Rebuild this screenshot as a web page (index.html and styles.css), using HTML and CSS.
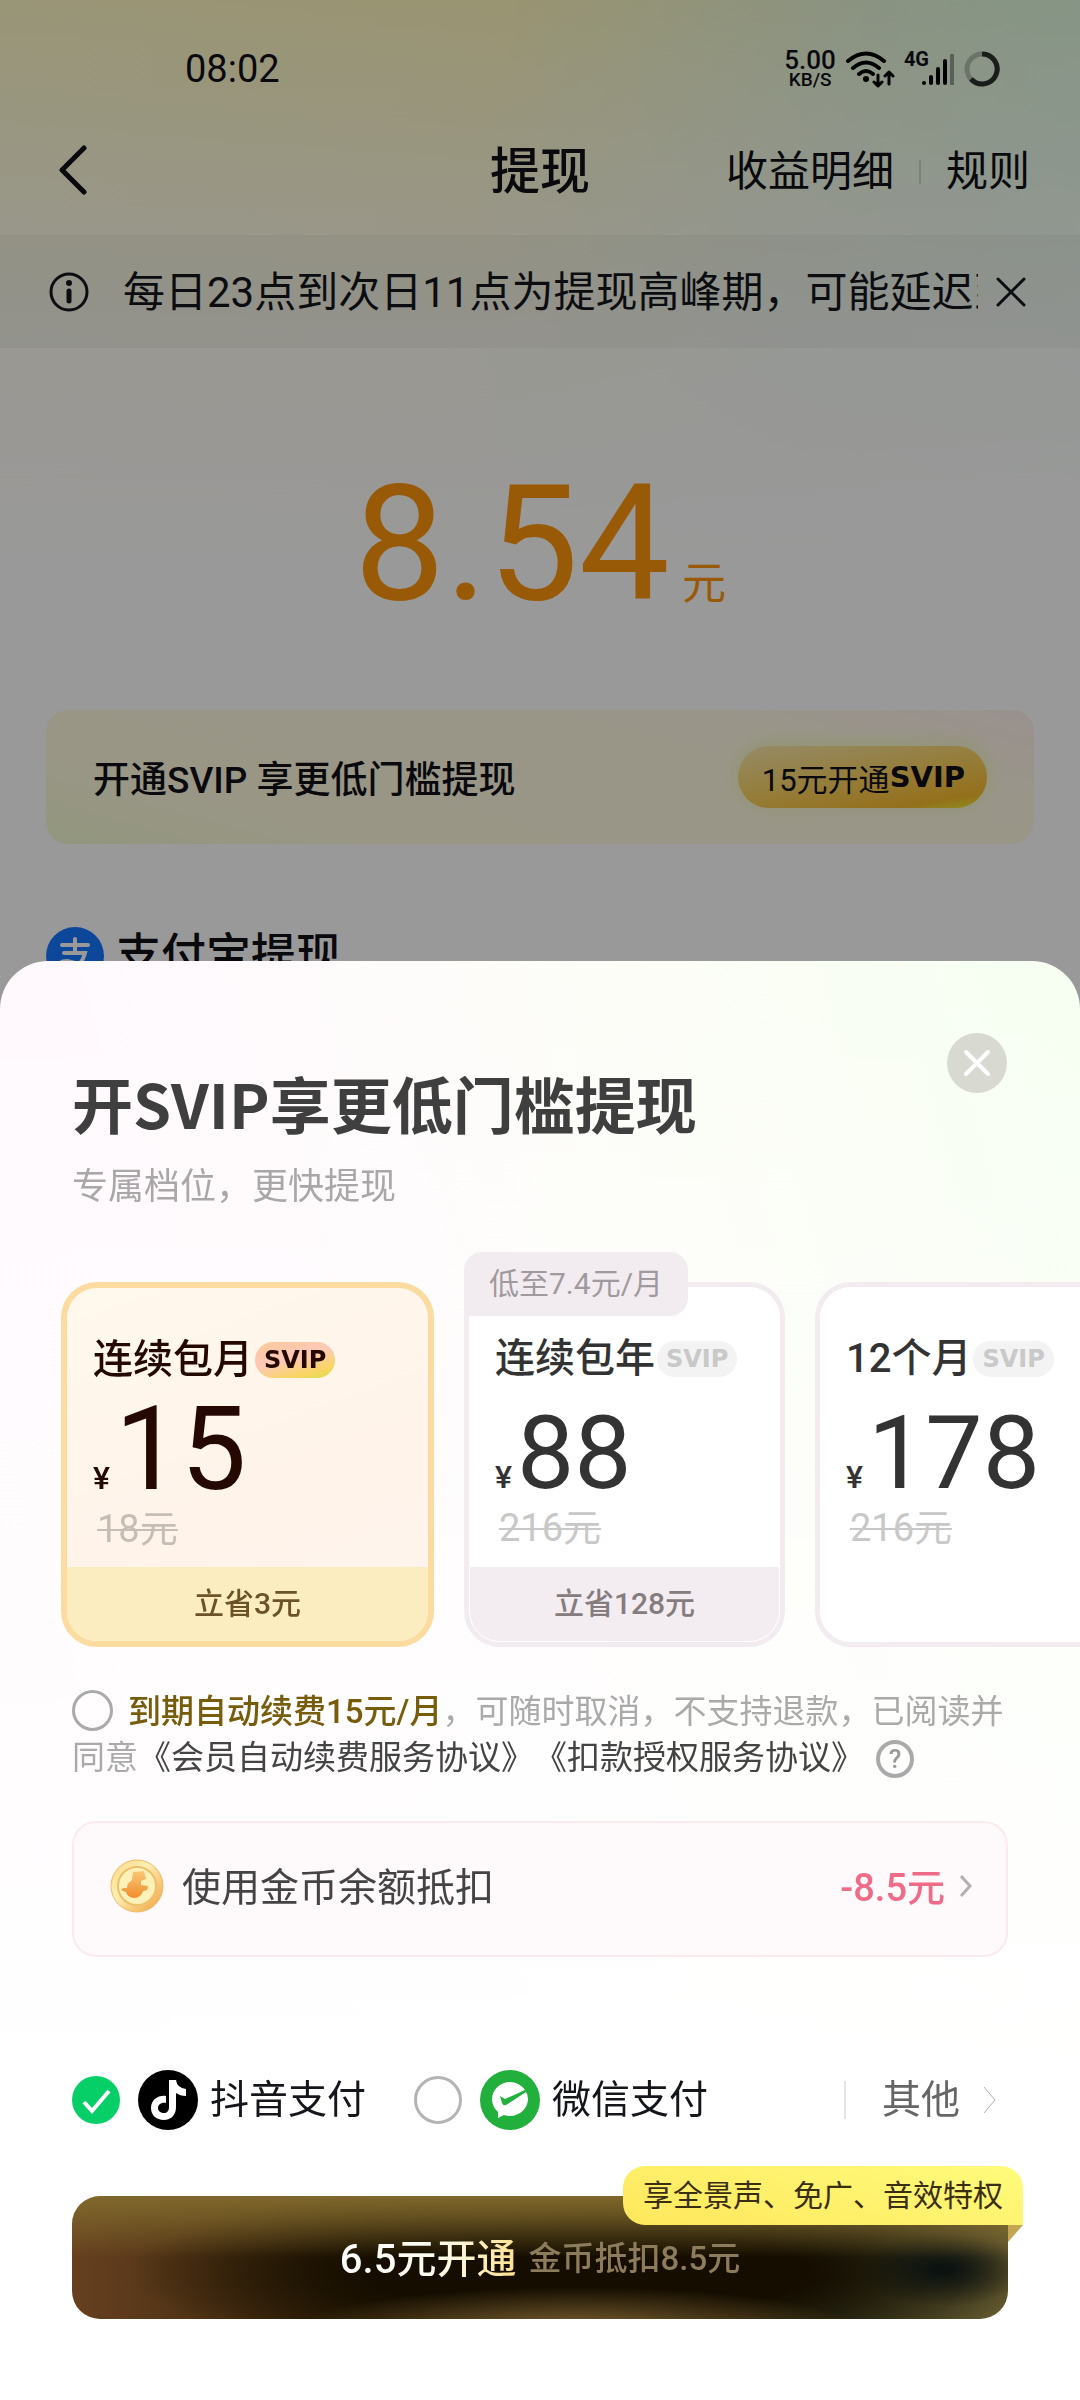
FILE: index.html
```html
<!DOCTYPE html>
<html lang="zh-CN">
<head>
<meta charset="utf-8">
<meta name="viewport" content="width=device-width, initial-scale=1">
<title>提现</title>
<link rel="stylesheet" href="styles.css">
</head>
<body>
<div class="page">
  <div class="status">
    <span class="clock">08:02</span>
    <div class="status-right">
      <div class="speed"><b>5.00</b><span>KB/S</span></div>
      <svg class="wifi" width="50" height="38" viewBox="0 0 50 38" fill="none" stroke="#000" stroke-width="4" stroke-linecap="round"><path d="M3 11Q21-4 39 11M8 18Q21 7 34 18M14 24Q21 18 28 24"/><circle cx="21" cy="29" r="3" fill="#000" stroke="none"/><path d="M33 25V36M29 32L33 36L37 32M44 34V22M40 26L44 22L48 26" stroke-width="3" stroke-linejoin="round"/></svg>
      <div class="signal"><span>4G</span>
        <svg width="34" height="34" viewBox="0 0 34 34" stroke="#000" stroke-width="4" stroke-linecap="round"><path d="M3 31V31M10 25V31M17 17V31M24 9V31"/><path d="M31 2V33" stroke-opacity=".35" stroke-linecap="butt"/></svg>
      </div>
      <svg width="36" height="36" viewBox="0 0 36 36" fill="none" stroke="#000" stroke-width="5"><circle cx="18" cy="18" r="15" stroke-opacity=".22"/><path d="M18 3A15 15 0 1 1 7 28" stroke-opacity=".75"/></svg>
    </div>
  </div>
  <header class="nav">
    <button class="icon-btn back" aria-label="返回"><svg width="30" height="50" viewBox="0 0 30 50" fill="none" stroke="#0f1018" stroke-width="5" stroke-linecap="round" stroke-linejoin="round"><path d="M26 3L4 25L26 47"/></svg></button>
    <h1>提现</h1>
    <nav class="nav-links"><a href="#">收益明细</a><i></i><a href="#">规则</a></nav>
  </header>
  <div class="notice">
    <svg width="42" height="42" viewBox="0 0 42 42" fill="none" stroke="#15161c"><circle cx="21" cy="21" r="18" stroke-width="3"/><path d="M21 20V30" stroke-width="5" stroke-linecap="round"/><circle cx="21" cy="12" r="3" fill="#15161c" stroke="none"/></svg>
    <p>每日23点到次日11点为提现高峰期，可能延迟到账</p>
    <button class="icon-btn" aria-label="关闭提示"><svg width="30" height="30" viewBox="0 0 30 30" stroke="#15161c" stroke-width="3" stroke-linecap="round"><path d="M2 2L28 28M28 2L2 28"/></svg></button>
  </div>
  <main class="main">
    <p class="amount"><strong>8.54</strong><span>元</span></p>
    <section class="banner">
      <p>开通SVIP 享更低门槛提现</p>
      <button class="pill">15元开通<b>SVIP</b></button>
    </section>
    <section class="alipay">
      <svg width="58" height="58" viewBox="0 0 58 58"><circle cx="29" cy="29" r="29" fill="#1677ff"/><g fill="none" stroke="#fff" stroke-width="4" stroke-linecap="round"><path d="M16 18H42M29 12V26M18 26H39Q36 38 26 43Q16 47 13 41Q12 34 21 34Q29 35 46 43"/></g></svg>
      <h2>支付宝提现</h2>
    </section>
  </main>
</div>

<div class="scrim">
  <section class="sheet" role="dialog" aria-labelledby="sheet-title">
    <div class="sheet-head">
      <div>
        <h2 id="sheet-title">开SVIP享更低门槛提现</h2>
        <p>专属档位，更快提现</p>
      </div>
      <button class="icon-btn close" aria-label="关闭"><svg width="28" height="28" viewBox="0 0 28 28" stroke="#fff" stroke-width="4" stroke-linecap="round"><path d="M3 3L25 25M25 3L3 25"/></svg></button>
    </div>

    <div class="plans">
      <button class="plan active">
        <span class="plan-body">
          <span class="plan-name">连续包月<em>SVIP</em></span>
          <span class="price"><small>¥</small>15</span>
          <s>18元</s>
        </span>
        <span class="save">立省3元</span>
      </button>
      <button class="plan">
        <span class="tag">低至7.4元/月</span>
        <span class="plan-body">
          <span class="plan-name">连续包年<em>SVIP</em></span>
          <span class="price"><small>¥</small>88</span>
          <s>216元</s>
        </span>
        <span class="save">立省128元</span>
      </button>
      <button class="plan">
        <span class="plan-body">
          <span class="plan-name">12个月<em>SVIP</em></span>
          <span class="price"><small>¥</small>178</span>
          <s>216元</s>
        </span>
      </button>
    </div>

    <div class="sheet-main">
      <p class="agree"><input type="checkbox" id="agree"><label for="agree"><b>到期自动续费15元/月</b>，可随时取消，不支持退款，已阅读并同意</label><a href="#">《会员自动续费服务协议》</a><a href="#">《扣款授权服务协议》</a><button class="help" aria-label="说明">?</button></p>

      <button class="coins">
        <svg width="54" height="54" viewBox="0 0 54 54"><defs><linearGradient id="coin" x1="0" y1="0" x2="1" y2="1"><stop offset="0" stop-color="#fbd583"/><stop offset=".4" stop-color="#ffefb4"/><stop offset="1" stop-color="#ee9f3a"/></linearGradient><linearGradient id="bird" x1="0" y1="0" x2="0" y2="1"><stop offset="0" stop-color="#fbc877"/><stop offset="1" stop-color="#f08c2c"/></linearGradient></defs><circle cx="27" cy="27" r="26" fill="url(#coin)" stroke="#f0bb68" stroke-width="1"/><circle cx="27" cy="27" r="19" fill="#fff1b8" stroke="#eec06c" stroke-width="2"/><path d="M23 13L34 12L36 20L31 22L31 26L38 27L37 31L33 32Q31 39 24 39Q17 38 16 33L11 31L13 29L17 29Q17 24 22 21Z" fill="url(#bird)"/></svg>
        <span>使用金币余额抵扣</span>
        <strong>-8.5元</strong>
        <svg width="14" height="24" viewBox="0 0 14 24" fill="none" stroke="#b4b0b2" stroke-width="3"><path d="M2 2L11 12L2 22"/></svg>
      </button>

      <div class="pay">
        <label><input type="radio" name="pay" checked>
          <svg width="60" height="60" viewBox="0 0 60 60"><circle cx="30" cy="30" r="30" fill="#000"/><path d="M31 10H38Q39 18 48 19V26Q42 26 38 23V37C38 46 32 50 26 50C18 50 13 45 13 38C13 30 20 25 28 26V33C23 32 20 35 20 38C20 41 23 43 26 43C29 43 31 41 31 37Z" fill="#fff"/></svg>抖音支付</label>
        <label><input type="radio" name="pay">
          <svg width="60" height="60" viewBox="0 0 60 60"><circle cx="30" cy="30" r="30" fill="#22b03c"/><path d="M30 12C20 12 12 20 12 29C12 35 15 39 18 42L18 48L24 45Q27 46 30 46C40 46 48 38 48 29Q48 25 46 22L26 35Q23 36 22 33L20 26L25 29L45 20Q39 12 30 12Z" fill="#fff"/></svg>微信支付</label>
        <a class="other" href="#">其他<svg width="16" height="30" viewBox="0 0 16 30" fill="none" stroke="#b0b0b0" stroke-width="1"><path d="M2 2L13 15L2 28"/></svg></a>
      </div>

      <div class="cta-wrap">
        <button class="cta"><b>6.5元开通</b><span>金币抵扣8.5元</span></button>
        <span class="tip">享全景声、免广、音效特权</span>
      </div>
    </div>
  </section>
</div>
</body>
</html>
```
FILE: styles.css
```css
* { box-sizing: border-box; margin: 0; padding: 0; }
body, button { font-family: Roboto, "Noto Sans CJK SC", sans-serif; color: #0f1018; }
button { border: 0; background: none; text-align: left; }
a { color: inherit; text-decoration: none; }
svg { display: block; flex: none; }

/* Page behind the sheet */
.page {
  min-height: 100vh;
  background:
    linear-gradient(180deg, transparent 0, #fffc 330px, #fff 560px),
    linear-gradient(100deg, #fff9c6 0, #fff7bd 34%, #e6f6d8 58%, #d2ffe9 100%);
}
.status { display: flex; align-items: center; justify-content: space-between; height: 116px; padding: 22px 80px 0 185px; }
.clock { font-size: 38px; }
.status-right { display: flex; align-items: center; gap: 9px; }
.speed { display: flex; flex-direction: column; align-items: center; font-size: 19px; line-height: 18px; font-weight: 500; }
.speed b { font-size: 26px; line-height: 22px; font-weight: 500; }
.signal { display: flex; }
.signal span { font-size: 20px; line-height: 14px; font-weight: 700; margin-right: -8px; }
.nav { display: grid; grid-template-columns: 1fr auto 1fr; align-items: center; height: 119px; padding: 0 50px 8px; }
.icon-btn { display: flex; align-items: center; justify-content: center; }
.back { justify-self: start; margin: 0 8px 4px; }
.nav h1 { font-size: 50px; font-weight: 500; line-height: 60px; }
.nav-links { display: flex; align-items: center; justify-self: end; gap: 25px; font-size: 42px; line-height: 60px; }
.nav-links i { width: 2px; height: 24px; background: #0002; }
.notice { display: flex; align-items: center; height: 113px; padding: 0 54px 0 48px; background: #00000009; }
.notice p { flex: 1; overflow: hidden; white-space: nowrap; margin: 2px 18px 0 33px; font-size: 42px; line-height: 60px; color: #15161c; }
.main { padding: 0 46px; }
.amount { display: flex; align-items: baseline; justify-content: center; gap: 12px; padding-top: 101px; color: #ff960e; line-height: 190px; }
.amount strong { font-size: 162px; font-weight: 400; }
.amount span { font-size: 44px; }
.banner { display: flex; align-items: center; justify-content: space-between; height: 134px; margin-top: 31px; padding: 0 47px; border-radius: 22px; background: linear-gradient(15deg, #f4fcd2 0, #fffadf 22%, #fffae4 75%, #fff1ed 100%); }
.banner p { font-size: 37px; font-weight: 500; }
.pill { display: flex; align-items: center; height: 62px; padding: 0 22px 0 24px; border-radius: 31px; background: linear-gradient(170deg, #f9e8ac 0, #f9d368 45%, #f7bb2f 85%, #edf035 100%); box-shadow: 0 -2px 12px 6px #f8f8cc; font-size: 31px; }
.pill b { font: 700 29px/40px "DejaVu Sans", sans-serif; }
.alipay { display: flex; align-items: center; gap: 12px; margin-top: 83px; }
.alipay h2 { font-size: 45px; font-weight: 500; line-height: 58px; }

/* Bottom sheet */
.scrim { position: fixed; inset: 0; display: flex; flex-direction: column; justify-content: flex-end; background: #0006; }
.sheet { overflow: hidden; padding: 72px 0 81px; border-radius: 48px 48px 0 0; background: linear-gradient(180deg, #fff0 0, #fff 80%), linear-gradient(75deg, #fff7fc 0, #fffafd 40%, #fcfdf7 68%, #f6fff1 100%), #fff; }
.sheet-head { display: flex; justify-content: space-between; align-items: flex-start; padding: 0 73px 0 72px; }
.sheet-head h2 { margin-top: 34px; font: 700 61px/72px "Noto Sans CJK SC", sans-serif; color: #3f3f3f; }
.sheet-head p { margin-top: 22px; font-size: 36px; line-height: 52px; color: #aaa7a9; }
.close { width: 60px; height: 60px; border-radius: 50%; background: #d8dad2; }
.plans { display: flex; align-items: flex-end; gap: 30px; padding: 39px 0 0 61px; overflow: hidden; }
.plan { position: relative; display: flex; flex-direction: column; flex: none; width: 321px; height: 365px; margin-top: 30px; border: 5px solid #f2ecf0; border-radius: 36px; background: #fff; color: #333; }
.plan.active { width: 373px; border: 6px solid #fcdba0; background: linear-gradient(160deg, #fff8ec, #fff3ea 60%, #fff5ec); color: #250800; }
.plan-body { display: flex; flex-direction: column; padding: 46px 0 0 26px; }
.plan-name { display: flex; align-items: center; gap: 2px; font-size: 40px; line-height: 52px; font-weight: 500; white-space: nowrap; }
.plan-name em { padding: 0 9px; border-radius: 18px; background: #f3f3f3; color: #c9c9c9; font: 700 24px/36px "DejaVu Sans", sans-serif; }
.active em { background: linear-gradient(165deg, #fcc9a0 10%, #fdc9b8 45%, #f8d660 80%, #d8dc50 100%); color: #250800; }
.price { display: flex; align-items: baseline; gap: 5px; height: 119px; font-size: 102px; line-height: 0; }
.price::before { content: ""; height: 103px; margin-right: -5px; }
.active .price { font-size: 117px; }
.price small { font-size: 32px; font-weight: 500; }
.plan s { padding-left: 4px; font-size: 38px; line-height: 48px; color: #c8c8c8; text-decoration-thickness: 2px; }
.active s { color: #c4beb5; }
.save { display: block; margin: auto 1px 1px; height: 74px; border-radius: 0 0 30px 30px; background: #f3ecf0; color: #857c80; font-size: 30px; line-height: 74px; font-weight: 500; text-align: center; }
.active .save { margin: auto 0 0; background: #fcedc0; color: #6b5227; }
.tag { position: absolute; left: -5px; top: -35px; height: 64px; padding: 0 25px; border-radius: 18px 18px 18px 0; background: #f2ecf0; color: #a09a9e; font-size: 30px; line-height: 64px; white-space: nowrap; }
.sheet-main { padding: 42px 72px 0; }
.agree { font-size: 33px; line-height: 46px; color: #aaa; text-spacing-trim: space-all; }
.agree b { font-weight: 500; color: #775c0c; }
.agree a { color: #444; }
.agree input { appearance: none; width: 41px; height: 41px; margin-right: 15px; border: 3px solid #aaa; border-radius: 50%; vertical-align: -8px; }
.help { width: 38px; height: 38px; margin-left: 12px; border: 4px solid #aaa; border-radius: 50%; color: #999; font-size: 26px; line-height: 30px; font-weight: 500; text-align: center; vertical-align: 1px; }
.coins { display: flex; align-items: center; width: 100%; height: 136px; margin-top: 40px; padding: 0 33px 6px 36px; border: 2px solid #fcebee; border-radius: 24px; background: #fef9fa; font-size: 39px; color: #444; }
.coins span { margin: 0 0 4px 18px; }
.coins strong { margin: 0 14px 4px auto; font-size: 38px; font-weight: 500; color: #ef6c88; }
.pay { display: flex; align-items: center; gap: 48px; margin-top: 113px; font-size: 39px; line-height: 60px; color: #15161c; }
.pay label { display: flex; align-items: center; }
.pay label svg { margin: 0 12px 0 18px; }
.pay input { appearance: none; width: 48px; height: 48px; border: 3px solid #b4b4b4; border-radius: 50%; }
.pay input:checked { border: 0; background: #05cf66 url("data:image/svg+xml,%3Csvg xmlns='http://www.w3.org/2000/svg' viewBox='0 0 48 48'%3E%3Cpath d='M12 26L20 35L37 15' fill='none' stroke='white' stroke-width='4'/%3E%3C/svg%3E"); }
.other { display: flex; align-items: center; gap: 22px; margin-left: auto; padding: 0 10px 0 36px; line-height: 38px; border-left: 2px solid #e4e4e4; color: #666; }
.cta-wrap { position: relative; margin-top: 66px; }
.cta { display: flex; align-items: center; justify-content: center; gap: 12px; width: 100%; height: 123px; padding-bottom: 4px; border-radius: 28px; white-space: nowrap;
  background:
    linear-gradient(180deg, #80682c 0, #80682cb0 18%, #80682c00 50%),
    radial-gradient(ellipse 30% 34% at 54% 108%, #7a6030 0, #7a603000 100%),
    radial-gradient(ellipse 9% 30% at 93% 60%, #0b1210 10%, #0b121000 100%),
    radial-gradient(ellipse 50% 75% at 56% 62%, #140d00 45%, #140d0000 100%),
    linear-gradient(90deg, #664020 0, #4e3214 14%, #2b1c04 32%, #2a2008 60%, #35371e 82%, #6a6034 100%); }
.cta b { font-size: 40px; font-weight: 500; background: linear-gradient(100deg, #fff 0, #fffdf0 55%, #fadf8c 100%); background-clip: text; color: transparent; }
.cta span { font-size: 33px; font-weight: 500; color: #8c7c5c; }
.tip { position: absolute; right: -15px; top: -30px; padding: 0 20px; border-radius: 22px 22px 0 22px; background: linear-gradient(15deg, #ffe75c, #fffb7c); color: #3a2e10; font-size: 30px; line-height: 59px; white-space: nowrap; }
.tip::after { content: ""; position: absolute; right: 0; top: 100%; border-top: 17px solid #c4a552; border-right: 15px solid transparent; }
```
